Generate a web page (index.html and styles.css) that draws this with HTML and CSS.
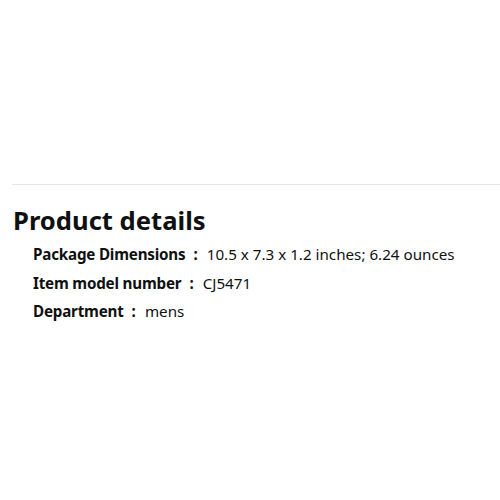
FILE: index.html
```html
<!DOCTYPE html>
<html lang="en">
<head>
    <meta charset="UTF-8">
    <title>Product details</title>
    <link rel="stylesheet" href="styles.css">
</head>
<body>
    <div class="container">
        <hr class="divider">
        <h2>Product details</h2>
        <ul class="details">
            <li><span class="label">Package Dimensions</span><span class="sep">:</span><span>10.5 x 7.3 x 1.2 inches; 6.24 ounces</span></li>
            <li><span class="label">Item model number</span><span class="sep">:</span><span>CJ5471</span></li>
            <li><span class="label">Department</span><span class="sep">:</span><span>mens</span></li>
        </ul>
    </div>
</body>
</html>
```

FILE: styles.css
```css
body {
    font-family: "Noto Sans", Arial, sans-serif;
    margin: 0;
    padding: 0;
    background-color: #fff;
    color: #0f1111;
}
.container {
    padding-top: 184px;
    padding-left: 12px;
}
.divider {
    border: none;
    border-top: 1px solid #e7e7e7;
    margin: 0;
}
h2 {
    font-size: 25.6px;
    font-weight: 700;
    margin: 18px 0 0 1px;
    line-height: 36px;
}
.details {
    list-style: none;
    margin: 5px 0 0 0;
    padding: 0 0 0 21px;
    font-size: 15.2px;
}
.details li {
    line-height: 20px;
    margin-bottom: 8.5px;
}
.label {
    font-weight: 700;
    letter-spacing: -0.2px;
}
.sep {
    font-weight: 700;
    margin: 0 9px 0 8px;
}
```
